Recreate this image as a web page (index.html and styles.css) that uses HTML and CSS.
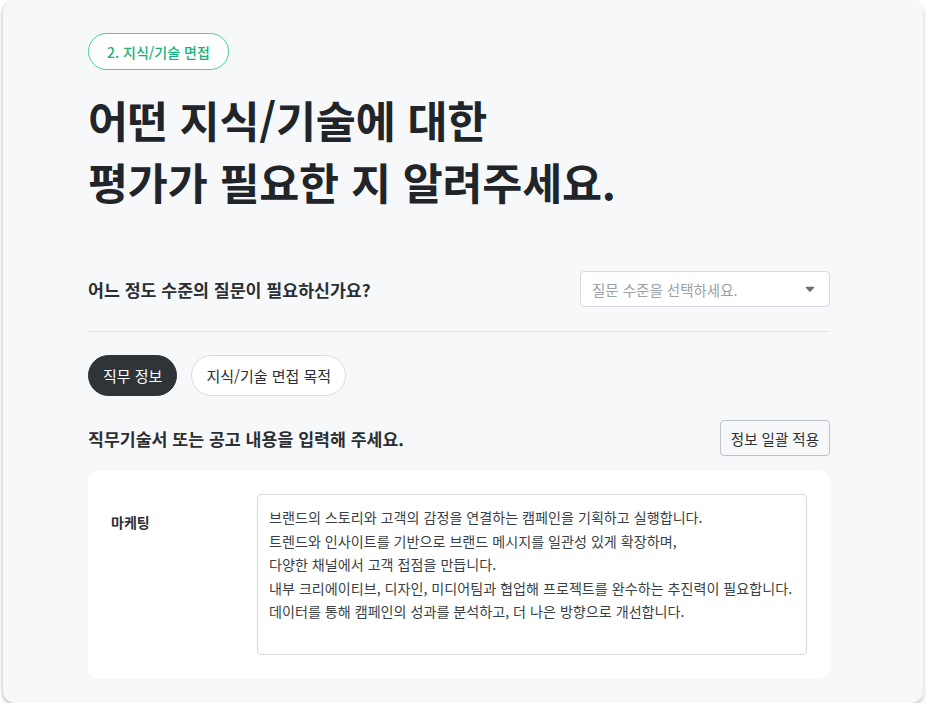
FILE: index.html
```html
<!DOCTYPE html>
<html lang="ko">
<head>
<meta charset="utf-8">
<link rel="stylesheet" href="styles.css">
</head>
<body>
<div class="card">
  <div class="content">
    <span class="badge">2. 지식/기술 면접</span>
    <h1 class="title">어떤 지식/기술에 대한<br>평가가 필요한 지 알려주세요.</h1>

    <div class="row question-row">
      <h2 class="heading">어느 정도 수준의 질문이 필요하신가요?</h2>
      <div class="select">
        <span class="placeholder">질문 수준을 선택하세요.</span>
        <svg class="caret" width="10" height="7" viewBox="0 0 10 7"><path d="M1.2 0.8 H8.8 Q9.8 0.8 9.1 1.7 L5.7 5.6 Q5 6.3 4.3 5.6 L0.9 1.7 Q0.2 0.8 1.2 0.8 Z" fill="#6b7078"/></svg>
      </div>
    </div>

    <div class="divider"></div>

    <div class="tabs">
      <span class="tab tab-active">직무 정보</span>
      <span class="tab">지식/기술 면접 목적</span>
    </div>

    <div class="row section-row">
      <h2 class="heading">직무기술서 또는 공고 내용을 입력해 주세요.</h2>
      <button class="btn">정보 일괄 적용</button>
    </div>

    <div class="panel">
      <div class="label">마케팅</div>
      <div class="textarea">브랜드의 스토리와 고객의 감정을 연결하는 캠페인을 기획하고 실행합니다.
트렌드와 인사이트를 기반으로 브랜드 메시지를 일관성 있게 확장하며,
다양한 채널에서 고객 접점을 만듭니다.
내부 크리에이티브, 디자인, 미디어팀과 협업해 프로젝트를 완수하는 추진력이 필요합니다.
데이터를 통해 캠페인의 성과를 분석하고, 더 나은 방향으로 개선합니다.</div>
    </div>
  </div>
</div>
</body>
</html>
```

FILE: styles.css
```css
* { box-sizing: border-box; }
html, body {
  margin: 0;
  padding: 0;
  background: #ffffff;
}
body {
  font-family: "Noto Sans CJK KR", "Noto Sans", sans-serif;
  color: #212529;
}
.card {
  width: 920px;
  height: 703px;
  margin: 0 0 0 3px;
  background: #f7f8fa;
  border-radius: 12px;
  box-shadow: 0 3px 5px rgba(0, 0, 0, 0.22), -1px 0 2px rgba(0, 0, 0, 0.08);
  padding: 33px 0 24px 85px;
}
.content {
  width: 742px;
}
.badge {
  display: inline-flex;
  align-items: center;
  height: 37px;
  padding: 0 18px;
  border: 1.5px solid #4ccb9b;
  border-radius: 19px;
  color: #17b27a;
  font-size: 14px;
  font-weight: 500;
  background: #ffffff;
}
.title {
  margin: 19px 0 0;
  font-size: 43.5px;
  line-height: 62px;
  font-weight: 700;
  color: #212529;
  letter-spacing: -0.2px;
}
.row {
  display: flex;
  align-items: center;
  justify-content: space-between;
}
.question-row {
  margin-top: 58px;
}
.heading {
  margin: 0;
  font-size: 17.3px;
  font-weight: 700;
  color: #2b2f33;
}
.select {
  width: 250px;
  height: 36px;
  background: #ffffff;
  border: 1px solid #d6dae0;
  border-radius: 4px;
  display: flex;
  align-items: center;
  justify-content: space-between;
  padding: 0 14px 0 11px;
}
.placeholder {
  font-size: 14.5px;
  color: #9ba1a8;
}
.caret { display: block; }
.divider {
  margin-top: 24px;
  height: 1px;
  background: #e1e4e8;
}
.tabs {
  margin-top: 23px;
  display: flex;
  gap: 14px;
}
.tab {
  display: inline-flex;
  align-items: center;
  height: 41px;
  padding: 0 14px;
  border-radius: 21px;
  font-size: 15px;
  color: #2b2f33;
  background: #ffffff;
  border: 1px solid #d8dce1;
}
.tab-active {
  background: #2f3439;
  border-color: #2f3439;
  color: #ffffff;
}
.section-row {
  margin-top: 24px;
}
.btn {
  height: 36px;
  padding: 0 10px;
  font-family: inherit;
  font-size: 14.5px;
  color: #2b2f33;
  background: #f7f8fa;
  border: 1px solid #bfc4ca;
  border-radius: 4px;
}
.panel {
  margin-top: 15px;
  background: #ffffff;
  border-radius: 10px;
  padding: 23px 23px 24px 23px;
  display: flex;
}
.label {
  width: 146px;
  flex: none;
  padding-top: 18px;
  font-size: 14px;
  line-height: 20px;
  font-weight: 700;
  color: #2b2f33;
}
.textarea {
  flex: 1;
  height: 161px;
  border: 1px solid #d6dae0;
  border-radius: 4px;
  padding: 11px 11px;
  font-size: 14.1px;
  line-height: 23.5px;
  color: #3a3f45;
  white-space: pre-line;
}
```
